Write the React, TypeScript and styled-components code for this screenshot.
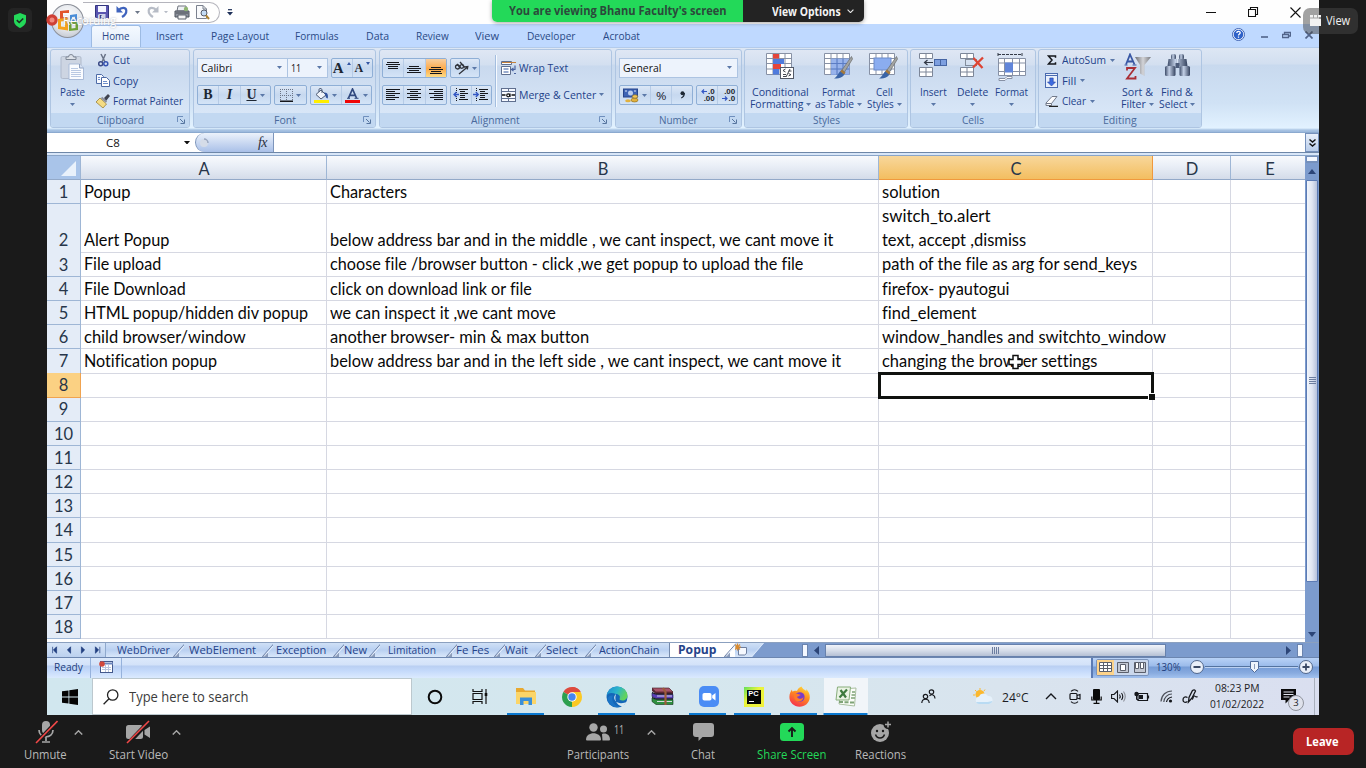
import React, { useLayoutEffect, useRef, useState } from 'react';
import styled, { createGlobalStyle, css } from 'styled-components';

const Global = createGlobalStyle`
  * { box-sizing: border-box; }
  body { margin: 0; background: #1a1a1a; overflow: hidden; font-variant-ligatures: none; }
  svg { display: block; flex: none; }
`;

const ui = `"Open Sans", "Noto Sans", sans-serif`;
const cellFont = `Lato, "Noto Sans", sans-serif`;

/* ---------- fitted text ---------- */
const FitBox = styled.span<{ $w: number }>`
  display: inline-block;
  width: ${p => p.$w}px;
  flex: none;
  text-align: left;
`;
const FitSpan = styled.span`
  display: inline-block;
  white-space: pre;
  transform-origin: 0 50%;
`;

/* Condenses or widens the text so that it takes exactly w pixels. */
function Fit({ w, children }: { w: number; children: string }) {
  const ref = useRef<HTMLSpanElement>(null);
  const [scale, setScale] = useState(1);
  useLayoutEffect(() => {
    setScale(w / ref.current!.offsetWidth);
  }, [w, children]);
  return <FitBox $w={w}><FitSpan ref={ref} style={{ transform: `scaleX(${scale})` }}>{children}</FitSpan></FitBox>;
}

/* ---------- page frame ---------- */
const Page = styled.div`
  position: relative;
  width: 1366px;
  height: 768px;
  display: flex;
  flex-direction: column;
  background: #1a1a1a;
  font-family: ${ui};
`;
const Screen = styled.div`
  width: 1272px;
  height: 715px;
  margin-left: 47px;
  display: flex;
  flex-direction: column;
  background: #fff;
  overflow: hidden;
`;

/* ---------- title bar ---------- */
const TitleBar = styled.div`
  height: 24px;
  flex: none;
  display: flex;
  align-items: center;
  justify-content: space-between;
  background: #fefefe;
`;
const QuickAccess = styled.div`
  display: flex;
  align-items: center;
  width: 137px;
  height: 21px;
  margin-left: 36px;
  padding-left: 12px;
  border: 1px solid #b4b4bc;
  border-left: none;
  border-radius: 0 11px 11px 0;
`;
const QuickSlot = styled.div<{ $w: number }>`
  width: ${p => p.$w}px;
  display: flex;
  justify-content: center;
`;
const TitleLeft = styled.div`
  display: flex;
  align-items: center;
  gap: 7px;
`;
const WindowButtons = styled.div`
  display: flex;
  align-items: center;
  padding-right: 18px;
  gap: 31px;
`;

/* ---------- ribbon ---------- */
const TabRow = styled.div`
  height: 23px;
  flex: none;
  display: flex;
  align-items: stretch;
  padding-left: 44px;
  background: #bfd9ff;
`;
const RibbonTab = styled.div<{ $w: number; $active?: boolean }>`
  width: ${p => p.$w}px;
  display: flex;
  align-items: center;
  justify-content: center;
  padding-top: 1px;
  font-size: 11.5px;
  line-height: 16px;
  color: #2a4a86;
  ${p => p.$active && css`
    margin-top: 1px;
    padding: 0 0 1px;
    background: linear-gradient(#f4f9ff, #e3edf9);
    border: 1px solid #9dbbe3;
    border-bottom: none;
    border-radius: 3px 3px 0 0;
  `}
`;
const DocButtons = styled.div`
  margin-left: auto;
  display: flex;
  align-items: center;
  padding: 0 6px 2px 0;
  gap: 14px;
`;
const HelpSlot = styled.div`
  margin-right: -6px;
  padding-right: 8px;
`;
const Ribbon = styled.div`
  height: 86px;
  flex: none;
  display: flex;
  padding: 1px 0 5px 3px;
  background: linear-gradient(#dde7f4 0, #d2dff0 16px, #c8d9ee 17px, #d0e2f5 55px, #e2f2ff 80px, #a9c4e3 82px, #9ab8dc 84px, #5f7fa8 86px);
  border-top: 1px solid #b3cbeb;
`;
const Group = styled.div<{ $w: number; $gap: number }>`
  width: ${p => p.$w}px;
  height: 79px;
  margin-right: ${p => p.$gap}px;
  flex: none;
  display: flex;
  flex-direction: column;
  border: 1px solid #aec5e2;
  border-radius: 3px;
  background: linear-gradient(#dfe7f4 0, #d3dff0 15px, #c9d9ee 16px, #d8e6f7 63px);
  overflow: hidden;
`;
const GroupBody = styled.div`
  height: 63px;
  display: flex;
  flex: none;
`;
const GroupLabel = styled.div`
  flex: 1;
  position: relative;
  display: flex;
  align-items: center;
  justify-content: center;
  background: #c2d8f1;
  color: #4a6a9c;
  font-size: 11.5px;
  line-height: 14px;
`;
const Launcher = styled.svg`
  position: absolute;
  right: 3px;
  top: 2px;
`;
const BigButton = styled.div<{ $w: number }>`
  width: ${p => p.$w}px;
  flex: none;
  display: flex;
  flex-direction: column;
  align-items: center;
  padding-top: 3px;
  color: #23428a;
  font-size: 11px;
  line-height: 12px;
  white-space: nowrap;
`;
const IconSlot = styled.div`
  height: 33px;
`;
const BigLine = styled.div`
  height: 12px;
  display: flex;
  align-items: center;
  gap: 3px;
`;
const SmallColumn = styled.div<{ $pl: number; $w: number }>`
  width: ${p => p.$w}px;
  flex: none;
  padding: 0 0 0 ${p => p.$pl}px;
`;
const SmallButton = styled.div<{ $icon?: number }>`
  height: 20.5px;
  display: grid;
  grid-template-columns: ${p => p.$icon ?? 17}px auto auto;
  justify-content: start;
  align-items: center;
  column-gap: 1px;
  color: #23428a;
  font-size: 11.2px;
  line-height: 14px;
`;
const ControlRows = styled.div<{ $pl?: number }>`
  padding: 8px 0 0 ${p => p.$pl ?? 3}px;
  display: flex;
  flex-direction: column;
  gap: 7px;
`;
const ControlRow = styled.div`
  height: 20px;
  display: flex;
  gap: 3px;
`;
const Combo = styled.div<{ $w: number }>`
  width: ${p => p.$w}px;
  height: 20px;
  padding: 0 5px 1px 3px;
  display: flex;
  align-items: center;
  justify-content: space-between;
  background: #edf3fc;
  border: 1px solid #adc4e2;
  color: #111;
  font-size: 11.5px;
  & + & { margin-left: -4px; }
`;
const Cluster = styled.div<{ $w: number }>`
  width: ${p => p.$w}px;
  height: 20px;
  display: flex;
  border: 1px solid #8fafd6;
  border-radius: 2px;
  background: linear-gradient(#dce7f6, #c6d8ef 50%, #d4e4f7);
  font-size: 11.5px;
  color: #1d2733;
`;
const ToolButton = styled.div<{ $on?: boolean; $w?: number }>`
  flex: ${p => (p.$w ? `0 0 ${p.$w}px` : '1')};
  display: flex;
  align-items: center;
  justify-content: center;
  gap: 3px;
  & + & { border-left: 1px solid #b6cbe6; }
  ${p => p.$on && css`background: linear-gradient(#f8cfa0, #fca949 55%, #fedc85);`}
`;
const Glyph = styled.span<{ $size?: number; $italic?: boolean; $under?: boolean }>`
  font-family: "Liberation Serif", serif;
  font-weight: 700;
  font-size: ${p => p.$size ?? 14}px;
  line-height: 16px;
  color: #1d2733;
  font-style: ${p => (p.$italic ? 'italic' : 'normal')};
  text-decoration: ${p => (p.$under ? 'underline' : 'none')};
`;
const VRule = styled.div`
  width: 1px;
  height: 52px;
  margin: 5px 4px 0 3px;
  background: #f6faff;
  border-left: 1px solid #a4bedf;
  box-sizing: content-box;
`;
const WideButton = styled.div`
  height: 20px;
  display: flex;
  align-items: center;
  gap: 3px;
  padding-bottom: 1px;
  color: #23428a;
  font-size: 11.2px;
`;
const DownPad = styled.div`
  padding-left: 3px;
`;

/* ---------- formula bar ---------- */
const FormulaBar = styled.div`
  height: 20px;
  flex: none;
  display: flex;
  background: #fff;
  border-bottom: 1px solid #6e87a8;
`;
const NameBox = styled.div`
  width: 148px;
  display: flex;
  align-items: center;
  padding: 0 5px 0 59px;
  justify-content: space-between;
  font-size: 11.5px;
  line-height: 18px;
  color: #111;
`;
const FxArea = styled.div`
  width: 79px;
  display: flex;
  align-items: center;
  justify-content: space-between;
  padding: 0 6px 0 3px;
  background: linear-gradient(#ecf2fb, #a9c0e8);
  border: 1px solid #7d95bb;
  border-width: 0 1px 0 1px;
  border-radius: 10px 0 0 10px;
`;
const FxGlyph = styled.span`
  font: italic 400 14px/16px "Liberation Serif", serif;
  color: #2a3040;
  letter-spacing: -0.5px;
`;
const ExpandButton = styled.div`
  width: 14px;
  margin-left: auto;
  display: flex;
  align-items: center;
  justify-content: center;
  border: 1px solid #7590bb;
  background: linear-gradient(#e9f0fb, #b9cdea);
`;
const FormulaGap = styled.div`
  height: 3px;
  flex: none;
  background: #d8e6f8;
  border-bottom: 1px solid #8aa5c8;
`;

/* ---------- sheet ---------- */
const SheetArea = styled.div`
  height: 486px;
  flex: none;
  display: flex;
`;
const Grid = styled.div`
  position: relative;
  width: 1258px;
  overflow: hidden;
  font-family: ${cellFont};
  font-size: 16.5px;
  color: #080808;
`;
const columns = '34px 246px 552px 274px 78px 78px';
const HeaderRow = styled.div`
  height: 23.8px;
  display: grid;
  grid-template-columns: ${columns};
`;
const ColHead = styled.div<{ $active?: boolean }>`
  display: flex;
  align-items: center;
  justify-content: center;
  padding: 3px 0 0 1px;
  font-size: 16.5px;
  color: #27364a;
  background: linear-gradient(#f8fafd, #e9eef6 45%, #d4dce9);
  border-right: 1px solid #9eb6d5;
  border-bottom: 1px solid #93a9c8;
  ${p => p.$active && css`
    background: linear-gradient(#f8d79b, #f3be60);
    border-color: #f0993d;
  `}
`;
const Corner = styled.div`
  display: flex;
  align-items: flex-end;
  justify-content: flex-end;
  padding: 0 4px 3px 0;
  background: #a9c4e9;
  border-right: 1px solid #9eb6d5;
  border-bottom: 1px solid #93a9c8;
`;
const Row = styled.div<{ $tall?: boolean }>`
  height: ${p => (p.$tall ? 48.4 : 24.2)}px;
  display: grid;
  grid-template-columns: ${columns};
`;
const RowHead = styled.div<{ $active?: boolean }>`
  display: flex;
  align-items: flex-end;
  justify-content: center;
  line-height: 21.2px;
  font-size: 16.5px;
  color: #27364a;
  background: #e4ecf7;
  border-right: 1px solid #9eb6d5;
  border-bottom: 1px solid #9eb6d5;
  ${p => p.$active && css`
    background: #fbd183;
    border-color: #f0a350;
  `}
`;
const Cell = styled.div<{ $spill?: boolean }>`
  display: flex;
  flex-direction: column;
  justify-content: flex-end;
  align-items: flex-start;
  padding-left: 3px;
  line-height: 24px;
  min-width: 0;
  border-right: 1px solid ${p => (p.$spill ? 'transparent' : '#d6d8e2')};
  border-bottom: 1px solid #d6d8e2;
`;
const CellLine = styled.div`
  height: 24.2px;
  white-space: nowrap;
  &:last-child { height: 23.4px; }
`;
const Selection = styled.div`
  position: absolute;
  left: 831px;
  top: 216px;
  width: 276px;
  height: 27px;
  border: 3px solid #10120f;
  &::after {
    content: '';
    position: absolute;
    right: -4px;
    bottom: -4px;
    width: 6px;
    height: 6px;
    background: #10120f;
    border: 1px solid #fff;
    border-width: 1px 0 0 1px;
  }
`;
const Pointer = styled.svg`
  position: absolute;
  left: 961px;
  top: 198px;
`;
const VScroll = styled.div`
  width: 14px;
  display: flex;
  flex-direction: column;
  align-items: center;
  background: #7c9bcd;
`;
const SplitBox = styled.div`
  width: 12px;
  height: 7px;
  background: #f4f8ff;
  border: 1px solid #7590bb;
  border-bottom-width: 2px;
`;
const VArrow = styled.div`
  height: 17px;
  display: flex;
  align-items: center;
`;
const VThumb = styled.div`
  width: 12px;
  height: 402px;
  display: flex;
  align-items: center;
  justify-content: center;
  border: 1px solid #5c7bb4;
  border-radius: 1px;
  background: linear-gradient(90deg, #f2f6fc, #dfe5f2 50%, #b6c2dc);
`;
const VRest = styled.div`
  flex: 1;
  display: flex;
  align-items: flex-end;
  padding-bottom: 5px;
`;

/* ---------- sheet tabs ---------- */
const TabStrip = styled.div`
  height: 16px;
  flex: none;
  display: flex;
  background: #7c9bcd;
  border-top: 1px solid #8ba0bf;
  border-bottom: 1px solid #6c86b0;
`;
const TabNav = styled.div`
  width: 59px;
  display: flex;
  align-items: center;
  gap: 4px;
  padding-left: 3px;
  background: linear-gradient(#d5e4f7, #bcd1ef);
  border-right: 1px solid #8fa9cd;
`;
const SheetTab = styled.div<{ $w: number; $active?: boolean }>`
  width: ${p => p.$w}px;
  display: flex;
  background: linear-gradient(#cfe0f6, #b9d0f1 50%, #d9e7fa);
  font-size: 11.5px;
  line-height: 14px;
  color: #25438a;
  ${p => p.$active && css`
    background: #fff;
    font-weight: 700;
    border-left: 1px solid #7489ab;
  `}
`;
const SheetName = styled.div<{ $w: number }>`
  width: ${p => p.$w}px;
  flex: none;
  display: flex;
  justify-content: center;
`;
const SlashHolder = styled.div`
  flex: 1;
  min-width: 0;
  display: flex;
  justify-content: flex-end;
  margin-right: -3px;
`;
const NewSheet = styled.div`
  width: 33px;
  display: flex;
  background: linear-gradient(#cfe0f6, #b9d0f1 50%, #d9e7fa);
`;
const HScroll = styled.div`
  flex: 1;
  display: flex;
  align-items: center;
  padding-left: 34px;
`;
const HSplit = styled.div`
  width: 6px;
  height: 13px;
  flex: none;
  background: #f4f8ff;
  border: 1px solid #6b84ae;
`;
const HThumb = styled.div`
  width: 341px;
  height: 13px;
  margin-left: 3px;
  display: flex;
  align-items: center;
  justify-content: center;
  border: 1px solid #6781ac;
  background: linear-gradient(#f1f4fa, #d6dde9 50%, #b5c0d4);
`;
const Spring = styled.div`
  flex: 1;
`;
const EndPad = styled.div`
  width: 16px;
`;

/* ---------- status bar ---------- */
const StatusBar = styled.div`
  height: 20px;
  flex: none;
  display: flex;
  align-items: stretch;
  background: linear-gradient(#dce9fb 0, #d3e2f9 7px, #b9cff2 8px, #c5dafb 13px, #dbeafe);
  color: #23407c;
  font-size: 10.5px;
`;
const StatusCell = styled.div<{ $w: number }>`
  width: ${p => p.$w}px;
  display: flex;
  align-items: center;
  justify-content: center;
  padding-bottom: 2px;
  border-right: 1px solid #96b2dc;
`;
const ZoomArea = styled.div`
  margin-left: auto;
  width: 228px;
  display: flex;
  align-items: center;
  padding: 0 0 2px 3px;
  border-left: 2px solid #5b7bb4;
  background: linear-gradient(#b9d2f6 0, #9bbbea 8px, #769cd6 9px, #88abdf 15px, #a3c2ef);
`;
const ViewModes = styled.div`
  width: 53px;
  height: 17px;
  display: flex;
  border: 1px solid #7a93bb;
  border-radius: 2px;
  background: #cbd8ec;
`;
const ViewMode = styled.div<{ $on?: boolean }>`
  flex: 1;
  display: flex;
  align-items: center;
  justify-content: center;
  background: ${p => (p.$on ? '#fdd38a' : 'transparent')};
`;
const Percent = styled.div`
  width: 41px;
  padding-left: 7px;
`;

/* ---------- taskbar ---------- */
const TaskBar = styled.div`
  height: 37px;
  flex: none;
  display: flex;
  align-items: stretch;
  background: linear-gradient(90deg, #d1e7ef, #d5e7ee 50%, #d9e4ee 75%, #dadff0);
`;
const StartButton = styled.div`
  width: 45px;
  display: flex;
  align-items: center;
  justify-content: center;
`;
const SearchBox = styled.div`
  width: 320px;
  display: flex;
  align-items: center;
  padding-left: 10px;
  gap: 10px;
  background: #fff;
  border: 1px solid #bcc8ce;
  color: #3c3c3c;
  font-size: 14.5px;
`;
const AppButton = styled.div<{ $w?: number; $open?: boolean; $active?: boolean }>`
  width: ${p => p.$w ?? 45.7}px;
  flex: none;
  display: flex;
  align-items: center;
  justify-content: center;
  background: ${p => (p.$active ? 'linear-gradient(#f1f5f9, #f1f5f9) center / 44px 37px no-repeat' : 'none')};
  ${p => p.$open && css`
    &::after {
      content: '';
      width: ${p.$active ? 44 : 37}px;
      height: 2px;
      margin-left: -${p.$active ? 44 : 37}px;
      align-self: flex-end;
      background: #0a78d0;
      transform: translateX(${p.$active ? 10.5 : 7}px);
    }
  `}
`;
const Tray = styled.div`
  margin-left: auto;
  display: flex;
  align-items: center;
`;
const TraySlot = styled.div<{ $w: number }>`
  width: ${p => p.$w}px;
  display: flex;
  align-items: center;
  justify-content: center;
`;
const Temp = styled.div`
  width: 36px;
  margin-left: -22px;
  font-size: 13px;
  color: #1c1c24;
`;
const Clock = styled.div`
  width: 68px;
  display: flex;
  flex-direction: column;
  align-items: center;
  padding-bottom: 2px;
  gap: 1px;
  font-size: 11.5px;
  line-height: 15.5px;
  color: #1c1c24;
`;
const Notif = styled.div`
  position: relative;
`;
const NotifCount = styled.div`
  position: absolute;
  left: 7px;
  top: 6px;
  width: 16px;
  height: 16px;
  text-align: center;
  border: 1px solid #8f939d;
  border-radius: 50%;
  background: #dfe2ec;
  color: #1c1c24;
  font-size: 9.5px;
  line-height: 14px;
`;
const NotifGap = styled.div`
  width: 7px;
`;
const ShowDesktop = styled.div`
  width: 5px;
  height: 37px;
  border-left: 1px solid #a9b0bd;
`;

/* ---------- meeting bar ---------- */
const MeetingBar = styled.div`
  height: 53px;
  display: grid;
  grid-template-columns: 185px 359px 1fr 73px;
  color: #b9b9b9;
  font-size: 12px;
`;
const MeetingGroup = styled.div<{ $pl: number }>`
  display: flex;
  padding-left: ${p => p.$pl}px;
`;
const MeetingButton = styled.div<{ $w: number; $green?: boolean }>`
  width: ${p => p.$w}px;
  flex: none;
  display: flex;
  flex-direction: column;
  align-items: center;
  padding-top: 4px;
  gap: 3px;
  line-height: 16px;
  color: ${p => (p.$green ? '#23d959' : '#b9b9b9')};
`;
const MeetingIcon = styled.div`
  height: 25px;
  display: flex;
  align-items: center;
`;
const Caret = styled.div<{ $w: number; $back?: boolean }>`
  width: ${p => p.$w}px;
  flex: none;
  margin-left: ${p => (p.$back ? -24 : 0)}px;
  padding-top: 15px;
  display: flex;
  justify-content: center;
`;
const Count = styled.span`
  position: absolute;
  left: 614px;
  top: 722px;
  color: #b9b9b9;
  font-size: 12.5px;
  line-height: 16px;
`;
const LeaveButton = styled.div`
  width: 61px;
  height: 27px;
  margin-top: 13px;
  display: flex;
  align-items: center;
  justify-content: center;
  padding: 0 2px 1px 0;
  border-radius: 7px;
  background: #b82525;
  color: #fff;
  font-size: 12.5px;
  font-weight: 700;
`;

/* ---------- overlays ---------- */
const Banner = styled.div`
  position: absolute;
  left: 492px;
  top: 0;
  height: 22px;
  display: flex;
  border-radius: 0 0 5px 5px;
  overflow: hidden;
  font-size: 12.5px;
  line-height: 21px;
  font-weight: 700;
  box-shadow: 0 1px 4px rgba(0, 0, 0, 0.35);
`;
const BannerText = styled.div`
  width: 251px;
  display: flex;
  justify-content: center;
  padding-left: 1px;
  background: #23d959;
  color: #2b4a3b;
`;
const BannerOptions = styled.div`
  width: 121px;
  display: flex;
  align-items: center;
  padding-left: 29px;
  gap: 6px;
  background: #232323;
  color: #f4f4f4;
`;
const Shield = styled.div`
  position: absolute;
  left: 8px;
  top: 8px;
  width: 24px;
  height: 24px;
  display: flex;
  align-items: center;
  justify-content: center;
  border-radius: 5px;
  background: #242424;
`;
const ViewBadge = styled.div`
  position: absolute;
  left: 1303px;
  top: 8px;
  width: 55px;
  height: 26px;
  display: flex;
  align-items: center;
  padding: 0 0 2px 7px;
  gap: 5px;
  border-radius: 7px;
  background: rgba(70, 70, 70, 0.5);
  color: #f2f2f2;
  font-size: 12px;
`;
const OfficeButton = styled.div`
  position: absolute;
  left: 51px;
  top: 4px;
  width: 33px;
  height: 34px;
  display: flex;
  align-items: center;
  justify-content: center;
  padding-left: 2px;
  border-radius: 50%;
  border: 1px solid #8b8f98;
  background: radial-gradient(circle at 50% 35%, #fff, #e2e5ea 55%, #b4b9c4);
`;
const Recording = styled.div`
  position: absolute;
  left: 46px;
  top: 12px;
  height: 16px;
  display: flex;
  align-items: center;
  gap: 5px;
  color: #fff;
  font-size: 12px;
  text-shadow: 0 0 2px rgba(120, 130, 145, 0.65);
`;

/* ---------- drawings ---------- */
const Down = ({ s = 5, c = '#5b78a8' }: { s?: number; c?: string }) => (
  <svg width={s} height={s * 0.6} viewBox="0 0 10 6"><path d="M0 0h10L5 6z" fill={c} /></svg>
);
const FarDown = () => <DownPad><Down s={5} /></DownPad>;

type Lines = number[][];
const LineIcon = ({ lines }: { lines: Lines }) => (
  <svg width="14" height="14" viewBox="0 0 14 14">
    {lines.map(([x, y, w], i) => <rect key={i} x={x} y={y} width={w} height="1" fill="#15171c" />)}
  </svg>
);
const topAlign: Lines = [[1, 1, 12], [0, 3, 14], [2, 5, 10], [2, 7, 10]];
const midAlign: Lines = [[2, 5, 10], [0, 7, 14], [2, 9, 10], [0, 11, 14]];
const bottomAlign: Lines = [[2, 6, 10], [0, 8, 14], [2, 10, 10], [1, 12, 12]];
const leftAlign: Lines = [[0, 1, 14], [0, 3, 9], [0, 5, 14], [0, 7, 9], [0, 9, 13], [0, 11, 9]];
const centerAlign: Lines = [[0, 1, 14], [3, 3, 8], [0, 5, 14], [3, 7, 8], [0, 9, 14], [3, 11, 8]];
const rightAlign: Lines = [[0, 1, 14], [5, 3, 9], [0, 5, 14], [5, 7, 9], [1, 9, 13], [5, 11, 9]];

const Indent = ({ out }: { out?: boolean }) => (
  <svg width="16" height="14" viewBox="0 0 16 14">
    <path d="M6 1.500h9M7 3.500h5M7 5.500h8M7 7.500h5M7 9.500h5M6 11.500h9" stroke="#15171c" strokeWidth="1.200" />
    <path d="M3.500 0v13" stroke="#15171c" strokeDasharray="1 1" />
    <path d={out ? 'M6 6.500H1M3.500 4 1 6.500 3.500 9' : 'M0 6.500h5M2.800 4 5.300 6.500 2.800 9'} stroke="#3457c4" strokeWidth="1.300" fill="none" />
  </svg>
);

const LauncherMark = () => (
  <Launcher width="10" height="10" viewBox="0 0 10 10">
    <path d="M1.500 7V1.500H7" fill="none" stroke="#6f8fbd" />
    <path d="M4 4l3.500 3.500M8.500 4.500v4h-4" fill="none" stroke="#56759f" />
  </Launcher>
);

const SaveIcon = () => (
  <svg width="14" height="14" viewBox="0 0 14 14">
    <path d="M.5.5h13v13H2L.5 12z" fill="#5a55b0" stroke="#32357f" />
    <rect x="3" y="1" width="8" height="6" fill="#f4f6ff" /><rect x="3.500" y="9" width="7" height="4.500" fill="#cdd3ea" /><rect x="4.500" y="10" width="2" height="3" fill="#33377f" />
  </svg>
);
const UndoIcon = ({ c, flip }: { c: string; flip?: boolean }) => (
  <svg width="13" height="14" viewBox="0 0 13 14">
    <g transform={flip ? 'translate(13 0) scale(-1 1)' : undefined}>
      <path d="M2.500 5.500C5 2 10 1.800 10.300 5.500c.2 2.800-1.500 4.800-4.300 6.500" fill="none" stroke={c} strokeWidth="2.200" />
      <path d="M.5 1v6.500H7z" fill={c} />
    </g>
  </svg>
);
const PrinterIcon = () => (
  <svg width="16" height="15" viewBox="0 0 16 15">
    <path d="M4 1h8l1 5H3z" fill="#eef0f4" stroke="#70757f" />
    <path d="M1 6h14v6H1z" fill="#8e939e" stroke="#4d525c" />
    <path d="M4 10h8v4H4z" fill="#f6f6f6" stroke="#5d626c" /><circle cx="12" cy="4" r="2.200" fill="#8fb572" /><path d="M2 8h12" stroke="#4a4e57" />
  </svg>
);
const PreviewIcon = () => (
  <svg width="15" height="15" viewBox="0 0 15 15">
    <path d="M1.500.5H8L11.500 4v9.500h-10z" fill="#f9fafc" stroke="#7b818e" /><path d="M8 .5V4h3.500" fill="none" stroke="#7b818e" />
    <circle cx="9" cy="8" r="3" fill="#c4dcf5" stroke="#555b68" /><path d="M11 10.300l3 3.700" stroke="#b08430" strokeWidth="2" />
  </svg>
);
const OfficeLogo = () => (
  <svg width="23" height="24" viewBox="0 0 23 24">
    <path d="M3 2l9-1v3H6v4h6v3H3z" fill="#e2552b" /><path d="M13 6l7-1v7h-7zM15 8v2.500h3V7.700z" fill="#4b8ed8" fillRule="evenodd" />
    <path d="M1 10l10-1.500v13L1 20zM4 12.500v5l4 .5v-6z" fill="#f5a21c" fillRule="evenodd" /><path d="M12 13h9v8l-9 1zM14.500 15.500v4l4-.5v-3.500z" fill="#6ea236" fillRule="evenodd" />
  </svg>
);
const PasteIcon = () => (
  <svg width="26" height="29" viewBox="0 0 26 29">
    <rect x="1" y="3.500" width="20" height="22" rx="1.500" fill="#cdd5e2" stroke="#b0bacb" />
    <path d="M6 6.500h10V4h-2.500a2.500 2.500 0 0 0-5 0H6z" fill="#dde2ea" stroke="#7e8796" />
    <path d="M9 11h10.500l4 4v11.500H9z" fill="#fafcff" stroke="#a9bbd8" />
    <path d="M19.500 11v4h4" fill="#d5e0f1" stroke="#8da0c0" /><path d="M11 15.500h7M11 17.500h10M11 19.500h10M11 21.500h10M11 23.500h10" stroke="#b9c9e3" />
  </svg>
);
const CutIcon = () => (
  <svg width="14" height="14" viewBox="0 0 14 14">
    <path d="M5 1l4 8M9.500 1 6 9" stroke="#6a7488" strokeWidth="1.500" /><circle cx="4.700" cy="10.800" r="2" fill="none" stroke="#3b4a86" strokeWidth="1.500" /><circle cx="9.800" cy="10.800" r="2" fill="none" stroke="#3552b0" strokeWidth="1.500" />
  </svg>
);
const CopyIcon = () => (
  <svg width="14" height="13" viewBox="0 0 14 13">
    <path d="M.5.5h5l2 2v7h-7z" fill="#f7faff" stroke="#4e6ba6" /><path d="M5.500 3.500h5l3 3v6h-8z" fill="#fff" stroke="#4e6ba6" /><path d="M2 3.500h2M2 5.500h2M7 7.500h4M7 9.500h5" stroke="#6d8dcb" />
  </svg>
);
const PainterIcon = () => (
  <svg width="14" height="14" viewBox="0 0 14 14">
    <path d="M8 4l4-4 2 2-4 5z" fill="#3f4350" /><path d="M4 4l6.500 6-3.500 4-7-6z" fill="#f5dc84" stroke="#8f7426" strokeWidth=".7" /><path d="M5.500 3.500 10.500 8" stroke="#8d8f9c" strokeWidth="2" />
  </svg>
);
const BordersIcon = () => (
  <svg width="13" height="13" viewBox="0 0 13 13"><path d="M.5 0v12M6.500 0v12M12.500 0v12M0 .5h13M0 6.500h13" stroke="#6a7385" strokeDasharray="1 1" /><path d="M0 12.300h13" stroke="#15171c" strokeWidth="1.400" /></svg>
);
const BucketIcon = () => (
  <svg width="15" height="15" viewBox="0 0 15 15"><path d="M2 6.500 7 2l5 5-5 4z" fill="#f0f4fa" stroke="#4d5b74" /><path d="M5 4V1.500C5 0 8 0 8 2v3" fill="none" stroke="#4d5b74" /><path d="M10 4.500c3.500-.5 4.500 2.500 3.800 6-2-.5-2.300-2-2.300-3z" fill="#31549f" /><rect y="12" width="15" height="3" fill="#ffee00" /></svg>
);
const FontColorIcon = () => (
  <svg width="15" height="15" viewBox="0 0 15 15"><path d="M3.500 10 7.500 1l4 9M5 7.300h5" fill="none" stroke="#31497f" strokeWidth="1.700" /><path d="M2 10.300h3M9.500 10.300h4" stroke="#31497f" /><rect y="12" width="15" height="3" fill="#f00606" /></svg>
);
const OrientIcon = () => (
  <svg width="15" height="14" viewBox="0 0 15 14"><g fill="none" stroke="#30343c" strokeWidth="1.300"><circle cx="3.500" cy="6" r="2" /><path d="M3 3l3.500 4M6 1l5 5.500" /><circle cx="7.800" cy="5.500" r="1.800" /><path d="M5 13l8.500-7M10.800 5.800l3-.3-.5 3" /></g></svg>
);
const WrapIcon = () => (
  <svg width="15" height="15" viewBox="0 0 15 15"><path d="M.5 1.500h10v3H.5zM.5 6.500h9v8h-9z" fill="#fff" stroke="#5f6f8f" /><path d="M1 2.500h14" stroke="#c4803c" /><path d="M2.500 9h5M2.500 12h5" stroke="#35589e" /><path d="M14 5.500v4h-3M13 13.500h2M12.500 8l-2 1.500 2 1.500" fill="none" stroke="#4a63a0" strokeWidth="1.200" /></svg>
);
const MergeIcon = () => (
  <svg width="15" height="14" viewBox="0 0 15 14"><rect x=".5" y=".5" width="14" height="13" fill="#f6f9ff" stroke="#5f6f8f" /><path d="M0 3.500h15M0 10.500h15M7.500 0v3.500M7.500 10.500V14" stroke="#5f6f8f" /><path d="M1 7h3.500M14 7h-3.500" stroke="#111" strokeWidth="1.500" /><circle cx="7.200" cy="7.300" r="1.500" fill="none" stroke="#111" strokeWidth="1.200" /><path d="M9 5.500V9" stroke="#111" strokeWidth="1.200" /></svg>
);
const CurrencyIcon = () => (
  <svg width="16" height="15" viewBox="0 0 16 15"><rect x=".5" y="1" width="14" height="8" fill="#3d63b4" stroke="#27458c" /><circle cx="7.500" cy="5" r="2.500" fill="#b8ccef" /><path d="M2 3h2M11 3h2" stroke="#dbe6fa" /><ellipse cx="11.500" cy="12" rx="3.500" ry="2" fill="#e1b13e" stroke="#8c681a" strokeWidth=".6" /><ellipse cx="12" cy="8.500" rx="2.800" ry="1.700" fill="#f0c75b" stroke="#8c681a" strokeWidth=".6" /><ellipse cx="5" cy="12.700" rx="2.800" ry="1.500" fill="#e1b13e" /></svg>
);
const DecimalBox = styled.div`
  display: flex;
  flex-direction: column;
  align-items: flex-end;
  width: 16px;
  font: 700 8px/7px "Liberation Sans", sans-serif;
  color: #22262e;
`;
const DecimalLine = styled.div`
  display: flex;
  align-items: center;
  gap: 1px;
`;
const TinyArrow = ({ left }: { left?: boolean }) => (
  <svg width="6" height="5" viewBox="0 0 6 5"><path d={left ? 'M6 2.500H1M3 .5 1 2.500l2 2' : 'M0 2.500h5M3 .5l2 2-2 2'} stroke="#3457c4" strokeWidth="1.200" fill="none" /></svg>
);

const gridLines = 'M.5.5h25v21H.5zM.5 5.500h25M.5 10.500h25M.5 16h25M7 .5v21M13 .5v21M19 .5v21';
const Brush = () => (
  <>
    <path d="M27.500 3.500 18 17l2.500 2L28.500 6z" fill="#a2a4a3" stroke="#6b6d6c" strokeWidth=".7" />
    <path d="M18 17l3 2.500c-1 4-4 6-11 6 3.500-1.500 4-6.500 8-8.500z" fill="#3a64a6" />
    <path d="M17 17.500l3.800 3" stroke="#a6793a" strokeWidth="2.500" />
  </>
);
const CondIcon = () => (
  <svg width="28" height="28" viewBox="0 0 28 28">
    <path d={gridLines} fill="#fff" stroke="#8791a5" />
    <rect x="7" y="1" width="6" height="4.500" fill="#e4453b" /><rect x="7" y="6" width="11" height="5" fill="#4f7bdd" /><rect x="7" y="11" width="8" height="5" fill="#e4453b" /><rect x="7" y="16" width="6" height="5.500" fill="#4f7bdd" />
    <rect x="14.500" y="14.500" width="13" height="11" fill="#fff" stroke="#525967" /><path d="M19.500 16l-2.500 1.500 2.500 1.500M17 21.500h3M17 23.500h3M24 16l-4 8M22.500 18h3M22.500 20.500l2.500 1.200-2.500 1.300" fill="none" stroke="#2d323c" strokeWidth=".9" />
  </svg>
);
const FormatTableIcon = () => (
  <svg width="30" height="28" viewBox="0 0 30 28"><path d={gridLines} fill="#fff" stroke="#8791a5" /><path d="M7 5.500h18.500V22H7z" fill="#86a6e8" opacity=".85" /><path d="M7 10.500h18.500M7 16h18.500M13 5.500V22M19 5.500V22" stroke="#5b7cc4" /><Brush /></svg>
);
const CellStylesIcon = () => (
  <svg width="30" height="28" viewBox="0 0 30 28"><path d={gridLines} fill="#fff" stroke="#8791a5" /><rect x="5" y="5" width="17" height="12" fill="#8badf0" stroke="#6d8bc9" /><Brush /></svg>
);
const InsertIcon = () => (
  <svg width="28" height="26" viewBox="0 0 28 26"><path d="M.5.5h13v5H.5zM7 .5v5M.5 14.500h13v9H.5zM7 14.500v9M.5 19h13" fill="#fff" stroke="#7c8698" /><rect x="15.500" y="6.500" width="12" height="6" fill="#7d9fe0" stroke="#4565a4" /><path d="M21.500 7v5.500" stroke="#4565a4" /><path d="M14 9.500H5.500M8.500 7 5.500 9.500l3 2.500" fill="none" stroke="#333a47" strokeWidth="1.200" /></svg>
);
const DeleteIcon = () => (
  <svg width="25" height="26" viewBox="0 0 25 26"><path d="M.5.5h13v5H.5zM7 .5v5M.5 14.500h13v9H.5zM7 14.500v9M.5 19h13" fill="#fff" stroke="#7c8698" /><path d="M5.500 6.500h11v6h-11z" fill="none" stroke="#333a47" strokeDasharray="1 1" /><path d="M13.500 5l9 10M23 4.500l-10 10" stroke="#dd4433" strokeWidth="2.300" /></svg>
);
const FormatIcon = () => (
  <svg width="29" height="28" viewBox="0 0 29 28"><path d="M1 1.500h24M1 0v4M25 0v4" stroke="#333a47" strokeDasharray="3 1" /><path d="M1.500 5.500h27v17h-27zM1.500 10h27M1.500 18.500h27M7.500 5.500v17M15.500 5.500v17M22.500 5.500v17" fill="#fff" stroke="#8791a5" /><rect x="8" y="9.500" width="8" height="10" fill="#6186da" /><path d="M2 25.500h6l2-2h5v2h-5l-2 2H2z" fill="#fff" stroke="#8791a5" /></svg>
);
const SigmaIcon = () => (
  <svg width="12" height="10" viewBox="0 0 12 10"><path d="M10.500 2.800V1h-7L7 5 3.500 9h7V7.200" fill="none" stroke="#15171c" strokeWidth="1.500" /></svg>
);
const FillIcon = () => (
  <svg width="13" height="15" viewBox="0 0 13 15"><rect x=".5" y=".5" width="12" height="14" fill="#e9f0fc" stroke="#4a6bb0" /><path d="M1 2.500h11" stroke="#4a6bb0" /><path d="M4.800 5h3.400v4h2.300L6.500 13 2.500 9h2.300z" fill="#3e6be0" stroke="#2443a0" strokeWidth=".6" /></svg>
);
const EraserIcon = () => (
  <svg width="13" height="12" viewBox="0 0 13 12"><path d="M1 8 7 1.500h5L6.500 8.500v2H1z" fill="#fdfdff" stroke="#737b8b" /><path d="M6.500 8.500H1" stroke="#737b8b" /><path d="M4 11.400h9" stroke="#222" strokeWidth="1.200" /></svg>
);
const SortIcon = () => (
  <svg width="28" height="28" viewBox="0 0 28 28"><defs><linearGradient id="fun"><stop offset="0" stopColor="#6d6f74" /><stop offset=".5" stopColor="#d3d4d8" /><stop offset="1" stopColor="#77797f" /></linearGradient></defs><path d="M11 4h16l-6.500 8v11l-4.500-2.500V12z" fill="url(#fun)" /><path d="M2 11.500 6 1.500l4.500 10M3.500 8.500h5" fill="none" stroke="#3857a4" strokeWidth="1.800" /><path d="M.5 12h3M8.500 12h4" stroke="#3857a4" /><path d="M3 17.500v-2.500h8L3 25.500h8.500v-2.500" fill="none" stroke="#a92f37" strokeWidth="1.800" /></svg>
);
const BinocIcon = () => (
  <svg width="27" height="25" viewBox="0 0 27 25"><defs><linearGradient id="bin"><stop offset="0" stopColor="#3d4c69" /><stop offset=".4" stopColor="#c3d0e6" /><stop offset="1" stopColor="#34425e" /></linearGradient></defs><rect x="7" y="1" width="5" height="6" rx="2" fill="url(#bin)" /><rect x="15" y="1" width="5" height="6" rx="2" fill="url(#bin)" /><path d="M4.500 6h8.500v7H3.500zM14 6h8.500l1 7H14z" fill="url(#bin)" /><rect x="1" y="13" width="10.500" height="10" rx="1.500" fill="url(#bin)" /><rect x="15.500" y="13" width="10.500" height="10" rx="1.500" fill="url(#bin)" /><rect x="11.500" y="10" width="4" height="5" fill="#4d5c7a" /></svg>
);
const HelpIcon = () => (
  <svg width="13" height="13" viewBox="0 0 13 13"><circle cx="6.500" cy="6.500" r="6" fill="#fff" stroke="#3e63b4" /><circle cx="6.500" cy="6.500" r="4.800" fill="#2f62c9" /><path d="M4.800 5c0-2.300 3.500-2.200 3.400-.2 0 1.300-1.700 1.200-1.700 2.700M6.500 8.500v1.300" stroke="#fff" strokeWidth="1.300" fill="none" /></svg>
);

const Slash = () => (
  <svg width="15" height="14" viewBox="0 0 15 14"><path d="M1 13.500 7 9.500v4.500H1z" fill="#8b9cba" /><path d="M1.500 13.500 13 .5" stroke="#6f83a8" fill="none" /><path d="M3 13.500 14 1" stroke="#eaf2fd" fill="none" /></svg>
);

/* ---------- taskbar drawings ---------- */
const WinLogo = () => (
  <svg width="16" height="16" viewBox="0 0 16 16"><path d="M0 2.300 6.500 1.400v6.200H0zM7.300 1.300 16 0v7.600H7.300zM0 8.400h6.500v6.200L0 13.700zM7.300 8.400H16V16l-8.700-1.300z" fill="#050505" /></svg>
);
const SearchGlyph = () => (
  <svg width="16" height="16" viewBox="0 0 16 16"><circle cx="9.700" cy="6" r="5.200" fill="none" stroke="#222" strokeWidth="1.300" /><path d="M6 9.800.6 15.300" stroke="#222" strokeWidth="1.300" /></svg>
);
const TaskView = () => (
  <svg width="17" height="15" viewBox="0 0 17 15"><path d="M1 0v2.500h9V0M1 15v-2.500h9V15M1 4.500h9v6H1z" fill="none" stroke="#111" strokeWidth="1.200" /><path d="M14 0v15" stroke="#111" strokeWidth="1.200" /><path d="M12.700 4h2.600v3h-2.600z" fill="#111" /></svg>
);
const FolderIcon = () => (
  <svg width="22" height="19" viewBox="0 0 22 19"><path d="M1 1h7l2 2.500h10V17H1z" fill="#e8a92f" /><path d="M1 5h20v12H1z" fill="#fbd568" /><path d="M5 18v-7.500h12V18h-3.500v-4h-5v4z" fill="#3a8fd8" /></svg>
);
const ChromeIcon = () => (
  <svg width="20" height="20" viewBox="0 0 20 20"><path d="M10 10 1.340 5A10 10 0 0 1 18.660 5z" fill="#dd4b3e" /><path d="M10 10 18.660 5A10 10 0 0 1 10 20z" fill="#fbc924" /><path d="M10 10v10A10 10 0 0 1 1.340 5z" fill="#2da04f" /><path d="M10 5h8.660L14 12.300z" fill="#fbc924" /><path d="M10 5h8.660A10 10 0 0 0 10 0z" fill="#dd4b3e" /><circle cx="10" cy="10" r="4.700" fill="#fff" /><circle cx="10" cy="10" r="3.700" fill="#4586f0" /></svg>
);
const EdgeIcon = () => (
  <svg width="22" height="22" viewBox="0 0 22 22"><defs><linearGradient id="ed" x1="0" y1="0" x2="1" y2=".4"><stop offset="0" stopColor="#1c87d6" /><stop offset=".55" stopColor="#2cb6c9" /><stop offset="1" stopColor="#62d35c" /></linearGradient></defs><circle cx="11" cy="11" r="10.500" fill="#1467b8" /><path d="M.5 10.500C1 4.500 5.500.5 11 .5c6 0 10.500 4.500 10.500 9 0 3.500-2.500 5-5 5-2 0-3.500-1-2.800-2.300.9-1.700-.7-4.200-3.700-4.200C5.500 6.200 1 7 .5 10.500z" fill="url(#ed)" /><path d="M10 8c-2 1.500-2.500 4.500-.5 7 1.800 2.200 5.500 2.800 9.700 1.500.6-.2 1 .3.600.8L17 20.500c-4.500-.5-9.500-4.500-7-12.500z" fill="#d6e8f1" /><path d="M7 9.500c-2 3-.5 9.500 6.500 11.500C7 22.500 2 18 1.500 13 2 10 5 9 7 9.500z" fill="#1b74c6" /></svg>
);
const RarIcon = () => (
  <svg width="23" height="19" viewBox="0 0 23 19"><path d="M1 1h17l4 4H5z" fill="#a8546a" stroke="#3a1218" strokeWidth=".6" /><path d="M1 1l4 4h17v2H5L1 4z" fill="#5a2633" /><path d="M1 6l4 1.500h17v4H5L1 9.500z" fill="#5a3fb8" stroke="#16173f" strokeWidth=".6" /><path d="M1 11l4 1.500h17v5H5L1 14.500z" fill="#2f9040" stroke="#10331a" strokeWidth=".6" /><path d="M1 5.500l4 1.500h17M1 10.500l4 1.500h17" stroke="#141420" fill="none" /><path d="M6 9h15M6 14.500h15" stroke="#e6e4ee" strokeWidth=".9" /><path d="M12 1l2.500 4v13" stroke="#9c5c3a" strokeWidth="2.200" fill="none" /></svg>
);
const ZoomIcon = () => (
  <svg width="20" height="21" viewBox="0 0 20 21"><rect width="20" height="21" rx="5" fill="#4a8cf5" /><rect x="3.500" y="7" width="9" height="7.500" rx="1.800" fill="#fff" /><path d="M13.200 9.500 16.500 7v7.500l-3.300-2.500z" fill="#fff" /></svg>
);
const PyBox = styled.div`
  width: 20px;
  height: 20px;
  padding: 3px;
  background: linear-gradient(135deg, #5fe05a, #e9f53c 40%, #f2f03a);
`;
const PyInner = styled.div`
  width: 14px;
  height: 14px;
  padding-left: 1px;
  background: #050505;
  color: #fff;
  font: 700 7.500px/8px "Liberation Sans", sans-serif;
  &::after { content: ''; display: block; width: 5px; height: 1px; margin: 3px 0 0 1px; background: #fff; }
`;
const FirefoxIcon = () => (
  <svg width="21" height="21" viewBox="0 0 21 21"><defs><linearGradient id="fx" x1=".8" y1="0" x2=".3" y2="1"><stop offset="0" stopColor="#ffe03c" /><stop offset=".45" stopColor="#ff8a1f" /><stop offset="1" stopColor="#f5304e" /></linearGradient></defs><path d="M12.500.5c1 2.500 3 3 4.800 4.500 0-.8 0-1.500-.3-2 2.500 2 4 5 3.800 8.500C20.400 17 16 20.700 10.500 20.700 5 20.700.4 16.600.4 11 .4 7.500 2 4.800 3 3.500c0 1 .2 1.700.6 2.300C5 4.500 7 4.500 8 5c1-2.500 2.500-3.800 4.500-4.500z" fill="url(#fx)" /><circle cx="10.800" cy="11" r="4.800" fill="#7a3bc8" /><path d="M5 8c2.500-.8 5 .2 6.800 1-1.700.4-2 1.500-3.800 1.700C9 13.500 13 13.500 14.500 11 14 16 8 17 6 13.500 5 11.500 4.500 9.800 5 8z" fill="#ff7a26" /></svg>
);
const ExcelIcon = () => (
  <svg width="22" height="21" viewBox="0 0 22 21"><path d="M6 3l15-1-1.500 18L4 18z" fill="#fbfdf9" stroke="#a9bfa0" /><path d="M17 6h3M16.500 9h3.500M16 12h4" stroke="#7fa377" strokeWidth="1.500" /><path d="M4 16h4M9.500 16.300h4M15 16.600h4" stroke="#7fa377" strokeWidth="2" /><path d="M2.500 1h13l-1.500 13H1z" fill="#eaf3e4" stroke="#87ad7a" /><path d="M5.500 4 11 11.500M12 3.500 4.500 11.500" stroke="#3d7a3d" strokeWidth="2.200" /></svg>
);
const PeopleIcon = () => (
  <svg width="15" height="15" viewBox="0 0 15 15"><g fill="none" stroke="#15171c" strokeWidth="1.200"><circle cx="4.500" cy="7.500" r="2.200" /><path d="M.8 14c.2-5 7.200-5 7.400 0" /><circle cx="10.500" cy="3" r="2.200" /><path d="M8.500 7c2-2.500 5.500-1 5.500 2.500" /></g></svg>
);
const WeatherIcon = () => (
  <svg width="20" height="17" viewBox="0 0 20 17"><circle cx="7" cy="6.500" r="4.500" fill="#fbb82e" /><path d="M7 0v2M0 7h2M2 2l1.500 1.500M12 1.500 11 3" stroke="#fbb82e" /><path d="M6 16a3.800 3.800 0 0 1 0-7.500 5 5 0 0 1 9-.5 4 4 0 0 1 1 8z" fill="#e6f1fb" /><path d="M6 16h10a4 4 0 0 0 3.500-3c-5 1.500-11 1-16.500 1A4 4 0 0 0 6 16z" fill="#b9dbf3" /></svg>
);
const Chev = ({ w = 12, c = '#15171c', sw = 1.4, down }: { w?: number; c?: string; sw?: number; down?: boolean }) => (
  <svg width={w} height={w * 0.6} viewBox="0 0 12 7"><path d={down ? 'M1 1l5 5 5-5' : 'M1 6l5-5 5 5'} fill="none" stroke={c} strokeWidth={sw} /></svg>
);
const MeetNow = () => (
  <svg width="12" height="15" viewBox="0 0 12 15"><g fill="none" stroke="#15171c" strokeWidth="1.200"><rect x="1" y="4.500" width="7" height="6" rx="1" /><path d="M8 6.500 11 5.500v4.500l-3-1M2 2.300C4 .3 7 .3 9 2.300M2 12.700c2 2 5 2 7 0" /></g></svg>
);
const MicGlyph = () => (
  <svg width="11" height="15" viewBox="0 0 11 15"><rect x="2" y="0" width="7" height="11" rx="1" fill="#0a0a0a" /><path d="M.8 7.500V11h9.400V7.500M5.500 11v3M2.500 14.300h6" fill="none" stroke="#0a0a0a" strokeWidth="1.200" /></svg>
);
const Speaker = () => (
  <svg width="15" height="13" viewBox="0 0 15 13"><g fill="none" stroke="#15171c" strokeWidth="1.100"><path d="M.6 4.500h2.400L6.500 1v11L3 8.500H.6z" /><path d="M8.500 4.500q1.500 2 0 4M10.500 3q2.500 3.500 0 7" /><path d="M12.500 1.500q3.500 5 0 10" stroke="#8b8f98" /></g></svg>
);
const Battery = () => (
  <svg width="16" height="12" viewBox="0 0 16 12"><path d="M4 2.500h9.500v7H4zM14.500 4.500v3" fill="none" stroke="#15171c" strokeWidth="1.200" /><rect x="5" y="4" width="4" height="4" fill="#15171c" /><circle cx="2.500" cy="3" r="2.200" fill="#15171c" /><path d="M2.500 5v3.500h2" stroke="#15171c" fill="none" /></svg>
);
const Wifi = () => (
  <svg width="13" height="13" viewBox="0 0 13 13"><g fill="none" stroke="#4e525b" strokeWidth="1.200"><path d="M1 11.500C1.500 5 6 1 12 1" /><path d="M3.800 12C4 7.500 7.500 4 12 4" /><path d="M6.500 12C7 9.500 9 7.500 12 7" stroke="#15171c" /></g><circle cx="10.500" cy="11" r="1.600" fill="#15171c" /></svg>
);
const Pen = () => (
  <svg width="16" height="15" viewBox="0 0 16 15"><g fill="none" stroke="#15171c" strokeWidth="1.300"><path d="M5.500 8.500C3 7 1 8.500 1 11s2.500 3 4.500 1.500" /><path d="M6.500 13 7 8.500l3.500-7q2-1.500 3 .5L10 9z" /><path d="M10 10.500c1.500-1 1-3 2-3.500s1.500 2 3.500.5" /></g></svg>
);

const Slider = () => (
  <svg width="124" height="18" viewBox="0 0 124 18">
    <path d="M15 8.500h93" stroke="#54739f" /><path d="M15 9.500h93" stroke="#bcd1f1" />
    {[7, 116].map(x => <circle key={x} cx={x} cy="9" r="6.500" fill="#e9eff9" stroke="#51678c" />)}
    <path d="M3.500 9h7M112.500 9h7M116 5.500v7" stroke="#3b4a66" strokeWidth="1.800" />
    <path d="M60.500 3.500h8v7l-4 4-4-4z" fill="#eef3fb" stroke="#4e6a9a" />
    <path d="M64.500 6v5" stroke="#8d9cba" />
  </svg>
);

/* ---------- data ---------- */
const ribbonTabs: [string, number, number][] = [
  ['Home', 50, 28], ['Insert', 56, 27], ['Page Layout', 86, 58], ['Formulas', 67, 43.5], ['Data', 54, 23],
  ['Review', 57, 33], ['View', 52, 24], ['Developer', 76, 48.5], ['Acrobat', 64, 37],
];
type T = [string, number];
const sheetRows: { a?: T; b?: T; c?: T[]; tall?: boolean; spill?: boolean }[] = [
  { a: ['Popup', 47], b: ['Characters', 77], c: [['solution', 58]] },
  { a: ['Alert Popup', 85], b: ['below address bar and in the middle , we cant inspect, we cant move it', 503], c: [['switch_to.alert', 108], ['text, accept ,dismiss', 144]], tall: true },
  { a: ['File upload', 77], b: ['choose file /browser button - click ,we get popup to upload the file', 473], c: [['path of the file as arg for send_keys', 255]] },
  { a: ['File Download', 102], b: ['click on download link or file', 202], c: [['firefox- pyautogui', 128]] },
  { a: ['HTML popup/hidden div popup', 224], b: ['we can inspect it ,we cant move', 226], c: [['find_element', 94]] },
  { a: ['child browser/window', 162], b: ['another browser- min & max button', 259], c: [['window_handles and switchto_window', 284]], spill: true },
  { a: ['Notification popup', 133], b: ['below address bar and in the left side , we cant inspect, we cant move it', 511], c: [['changing the browser settings', 215]] },
  {}, {}, {}, {}, {}, {}, {}, {}, {}, {}, {},
];
const sheetTabs: [string, number, number, number][] = [
  ['WebDriver', 78, 75, 53], ['WebElement', 89, 77, 67], ['Exception', 71, 56, 50], ['New', 36, 23, 23],
  ['Limitation', 77, 64, 48], ['Fe Fes', 48, 31, 33], ['Wait', 41, 23, 23], ['Select', 50, 32, 32], ['ActionChain', 73, 66, 60],
];

const Label = ({ text, w, launcher }: { text: string; w: number; launcher?: boolean }) => (
  <GroupLabel><Fit w={w}>{text}</Fit>{launcher && <LauncherMark />}</GroupLabel>
);

function RibbonPanel() {
  return (
    <Ribbon>
      <Group $w={140} $gap={3}>
        <GroupBody>
          <BigButton $w={43}>
            <IconSlot><PasteIcon /></IconSlot>
            <BigLine><Fit w={25}>Paste</Fit></BigLine>
            <BigLine><Down /></BigLine>
          </BigButton>
          <SmallColumn $pl={2} $w={95}>
            <SmallButton $icon={16}><CutIcon /><Fit w={17}>Cut</Fit></SmallButton>
            <SmallButton $icon={16}><CopyIcon /><Fit w={25}>Copy</Fit></SmallButton>
            <SmallButton $icon={16}><PainterIcon /><Fit w={70}>Format Painter</Fit></SmallButton>
          </SmallColumn>
        </GroupBody>
        <Label text="Clipboard" w={47} launcher />
      </Group>

      <Group $w={183} $gap={3}>
        <GroupBody>
          <ControlRows>
            <ControlRow>
              <Combo $w={91}><Fit w={31}>Calibri</Fit><Down /></Combo>
              <Combo $w={41}><Fit w={10}>11</Fit><Down /></Combo>
              <Cluster $w={42}>
                <ToolButton><Glyph $size={15}>A</Glyph><svg width="4" height="12" viewBox="0 0 4 12"><path d="M0 3 2 0l2 3z" fill="#3457a4" /></svg></ToolButton>
                <ToolButton><Glyph $size={12}>A</Glyph><svg width="4" height="12" viewBox="0 0 4 12"><path d="M0 0h4L2 3z" fill="#3457a4" /></svg></ToolButton>
              </Cluster>
            </ControlRow>
            <ControlRow>
              <Cluster $w={74}>
                <ToolButton $w={20}><Glyph>B</Glyph></ToolButton>
                <ToolButton $w={22}><Glyph $italic>I</Glyph></ToolButton>
                <ToolButton><Glyph $under>U</Glyph><Down /></ToolButton>
              </Cluster>
              <Cluster $w={33}><ToolButton><BordersIcon /><Down /></ToolButton></Cluster>
              <Cluster $w={62}>
                <ToolButton><BucketIcon /><Down /></ToolButton>
                <ToolButton><FontColorIcon /><Down /></ToolButton>
              </Cluster>
            </ControlRow>
          </ControlRows>
        </GroupBody>
        <Label text="Font" w={22} launcher />
      </Group>

      <Group $w={233} $gap={3}>
        <GroupBody>
          <ControlRows $pl={2}>
            <ControlRow>
              <Cluster $w={65}>
                <ToolButton><LineIcon lines={topAlign} /></ToolButton>
                <ToolButton><LineIcon lines={midAlign} /></ToolButton>
                <ToolButton $on><LineIcon lines={bottomAlign} /></ToolButton>
              </Cluster>
              <Cluster $w={30}><ToolButton><OrientIcon /><Down /></ToolButton></Cluster>
            </ControlRow>
            <ControlRow>
              <Cluster $w={65}>
                <ToolButton><LineIcon lines={leftAlign} /></ToolButton>
                <ToolButton><LineIcon lines={centerAlign} /></ToolButton>
                <ToolButton><LineIcon lines={rightAlign} /></ToolButton>
              </Cluster>
              <Cluster $w={42}>
                <ToolButton><Indent out /></ToolButton>
                <ToolButton><Indent /></ToolButton>
              </Cluster>
            </ControlRow>
          </ControlRows>
          <VRule />
          <ControlRows $pl={0}>
            <WideButton><WrapIcon /><Fit w={49}>Wrap Text</Fit></WideButton>
            <WideButton><MergeIcon /><Fit w={77}>Merge & Center</Fit><Down /></WideButton>
          </ControlRows>
        </GroupBody>
        <Label text="Alignment" w={49} launcher />
      </Group>

      <Group $w={127} $gap={2}>
        <GroupBody>
          <ControlRows>
            <ControlRow><Combo $w={119}><Fit w={38}>General</Fit><Down /></Combo></ControlRow>
            <ControlRow>
              <Cluster $w={74}>
                <ToolButton $w={30}><CurrencyIcon /><Down /></ToolButton>
                <ToolButton><Fit w={11}>%</Fit></ToolButton>
                <ToolButton><svg width="5" height="8" viewBox="0 0 5 8"><circle cx="2.500" cy="2.200" r="2" fill="#1d2733" /><path d="M4.300 2q.3 3.500-3 5" fill="none" stroke="#1d2733" strokeWidth="1.200" /></svg></ToolButton>
              </Cluster>
              <Cluster $w={42}>
                <ToolButton><DecimalBox><DecimalLine><TinyArrow left />.0</DecimalLine><DecimalLine>.00</DecimalLine></DecimalBox></ToolButton>
                <ToolButton><DecimalBox><DecimalLine>.00</DecimalLine><DecimalLine><TinyArrow />.0</DecimalLine></DecimalBox></ToolButton>
              </Cluster>
            </ControlRow>
          </ControlRows>
        </GroupBody>
        <Label text="Number" w={39} launcher />
      </Group>

      <Group $w={164} $gap={2}>
        <GroupBody>
          <BigButton $w={70}><IconSlot><CondIcon /></IconSlot><BigLine><Fit w={57}>Conditional</Fit></BigLine><BigLine><Fit w={53}>Formatting</Fit><Down s={5} /></BigLine></BigButton>
          <BigButton $w={47}><IconSlot><FormatTableIcon /></IconSlot><BigLine><Fit w={33}>Format</Fit></BigLine><BigLine><Fit w={39}>as Table</Fit><Down s={5} /></BigLine></BigButton>
          <BigButton $w={44}><IconSlot><CellStylesIcon /></IconSlot><BigLine><Fit w={17}>Cell</Fit></BigLine><BigLine><Fit w={27}>Styles</Fit><Down s={5} /></BigLine></BigButton>
        </GroupBody>
        <Label text="Styles" w={27} />
      </Group>

      <Group $w={126} $gap={2}>
        <GroupBody>
          <BigButton $w={44}><IconSlot><InsertIcon /></IconSlot><BigLine><Fit w={27}>Insert</Fit></BigLine><BigLine><Down /></BigLine></BigButton>
          <BigButton $w={35}><IconSlot><DeleteIcon /></IconSlot><BigLine><Fit w={31}>Delete</Fit></BigLine><BigLine><Down /></BigLine></BigButton>
          <BigButton $w={42}><IconSlot><FormatIcon /></IconSlot><BigLine><Fit w={33}>Format</Fit></BigLine><BigLine><Down /></BigLine></BigButton>
        </GroupBody>
        <Label text="Cells" w={22} />
      </Group>

      <Group $w={164} $gap={0}>
        <GroupBody>
          <SmallColumn $pl={6} $w={78}>
            <SmallButton $icon={16}><SigmaIcon /><Fit w={44}>AutoSum</Fit><FarDown /></SmallButton>
            <SmallButton $icon={16}><FillIcon /><Fit w={14}>Fill</Fit><FarDown /></SmallButton>
            <SmallButton $icon={16}><EraserIcon /><Fit w={24}>Clear</Fit><FarDown /></SmallButton>
          </SmallColumn>
          <BigButton $w={41}><IconSlot><SortIcon /></IconSlot><BigLine><Fit w={31}>Sort &</Fit></BigLine><BigLine><Fit w={25}>Filter</Fit><Down s={5} /></BigLine></BigButton>
          <BigButton $w={38}><IconSlot><BinocIcon /></IconSlot><BigLine><Fit w={32}>Find &</Fit></BigLine><BigLine><Fit w={28}>Select</Fit><Down s={5} /></BigLine></BigButton>
        </GroupBody>
        <Label text="Editing" w={34} />
      </Group>
    </Ribbon>
  );
}

function Sheet() {
  return (
    <SheetArea>
      <Grid>
        <HeaderRow>
          <Corner><svg width="15" height="15" viewBox="0 0 15 15"><path d="M15 0v15H0z" fill="#e9f1fb" /></svg></Corner>
          {['A', 'B', 'C', 'D', 'E'].map(l => <ColHead key={l} $active={l === 'C'}>{l}</ColHead>)}
        </HeaderRow>
        {sheetRows.map((r, i) => (
          <Row key={i} $tall={r.tall}>
            <RowHead $active={i === 7}>{i + 1}</RowHead>
            <Cell>{r.a && <CellLine><Fit w={r.a[1]}>{r.a[0]}</Fit></CellLine>}</Cell>
            <Cell>{r.b && <CellLine><Fit w={r.b[1]}>{r.b[0]}</Fit></CellLine>}</Cell>
            <Cell $spill={r.spill}>{r.c?.map(([t, w]) => <CellLine key={t}><Fit w={w}>{t}</Fit></CellLine>)}</Cell>
            <Cell /><Cell />
          </Row>
        ))}
        <Selection />
        <Pointer width="15" height="16" viewBox="0 0 15 16"><path d="M5 1.500h5v4h4v5h-4v4H5v-4H1v-5h4z" fill="#fff" stroke="#111" strokeWidth="1.500" /></Pointer>
      </Grid>
      <VScroll>
        <SplitBox />
        <VArrow><svg width="8" height="5" viewBox="0 0 8 5"><path d="M4 0l4 5H0z" fill="#2c4577" /></svg></VArrow>
        <VThumb><svg width="7" height="8" viewBox="0 0 7 8"><path d="M0 .5h7M0 2.500h7M0 4.500h7M0 6.500h7" stroke="#6d7ea0" /></svg></VThumb>
        <VRest><svg width="8" height="5" viewBox="0 0 8 5"><path d="M0 0h8L4 5z" fill="#2c4577" /></svg></VRest>
      </VScroll>
    </SheetArea>
  );
}

const navPaths = ['M2 1v8M7 1v8L3 5z', 'M7 1v8L3 5z', 'M3 1v8l4-4z', 'M3 1v8l4-4zM8.500 1v8'];

function SheetTabs() {
  return (
    <TabStrip>
      <TabNav>{navPaths.map(d => <svg key={d} width="10" height="8" viewBox="0 0 10 10"><path d={d} fill="#213f80" stroke="#213f80" strokeWidth=".9" /></svg>)}</TabNav>
      {sheetTabs.map(([name, w, tw, fw]) => (
        <SheetTab key={name} $w={w}><SheetName $w={tw}><Fit w={fw}>{name}</Fit></SheetName>{name !== 'ActionChain' && <SlashHolder><Slash /></SlashHolder>}</SheetTab>
      ))}
      <SheetTab $w={66} $active><SheetName $w={54}><Fit w={38}>Popup</Fit></SheetName><SlashHolder><Slash /></SlashHolder></SheetTab>
      <NewSheet>
        <svg width="33" height="14" viewBox="0 0 33 14">
          <path d="M3.500 4.500h8v6l-2 1.500h-6z" fill="#f6f9ff" stroke="#6e7f9f" /><path d="M-1 4h7M2.500 .5v7M0 1.500l5 5M5 1.500l-5 5" stroke="#d98a2c" strokeWidth="1.100" />
          <path d="M17 14 29 0h4v14z" fill="#7c9bcd" /><path d="M16.500 14 28.500 0" stroke="#d9e7fa" />
        </svg>
      </NewSheet>
      <HScroll>
        <HSplit />
        <svg width="14" height="9" viewBox="0 0 14 9"><path d="M11 0v9L6 4.500z" fill="#2c4577" /></svg>
        <HThumb><svg width="8" height="7" viewBox="0 0 8 7"><path d="M.5 0v7M2.500 0v7M4.500 0v7M6.500 0v7" stroke="#6d7ea0" /></svg></HThumb>
        <Spring />
        <svg width="14" height="9" viewBox="0 0 14 9"><path d="M3 0v9l5-4.500z" fill="#2c4577" /></svg>
        <HSplit /><EndPad />
      </HScroll>
    </TabStrip>
  );
}

function Status() {
  return (
    <StatusBar>
      <StatusCell $w={44}><Fit w={29}>Ready</Fit></StatusCell>
      <StatusCell $w={31}>
        <svg width="14" height="12" viewBox="0 0 14 12"><rect x="1.500" y=".5" width="12" height="11" fill="#fff" stroke="#44598c" /><path d="M2 2.500h12" stroke="#6d86bd" strokeWidth="2" /><path d="M3 6.500h9M3 8.500h9M6.500 4v7M9.500 4v7" stroke="#b9c6df" /><circle cx="3" cy="3" r="2.800" fill="#d1483c" /></svg>
      </StatusCell>
      <ZoomArea>
        <ViewModes>
          <ViewMode $on><svg width="13" height="10" viewBox="0 0 13 10"><path d="M.5.5h12v9H.5zM.5 3.500h12M.5 6.500h12M4.500 .5v9M8.500 .5v9" fill="#fff" stroke="#5a5f6b" /></svg></ViewMode>
          <ViewMode><svg width="12" height="11" viewBox="0 0 12 11"><path d="M.5.5h11v10H.5z" fill="#c2c7d2" stroke="#5a5f6b" /><path d="M3.500 2.500h5v6h-5z" fill="#fff" stroke="#5a5f6b" /></svg></ViewMode>
          <ViewMode><svg width="12" height="11" viewBox="0 0 12 11"><path d="M.5.5h11v10H.5z" fill="#c2c7d2" stroke="#5a5f6b" /><path d="M1.500.5h3v6h-3zM6.500.5h3v6h-3z" fill="#fff" stroke="#5a5f6b" /></svg></ViewMode>
        </ViewModes>
        <Percent><Fit w={25}>130%</Fit></Percent>
        <Slider />
      </ZoomArea>
    </StatusBar>
  );
}

function Tasks() {
  return (
    <TaskBar>
      <StartButton><WinLogo /></StartButton>
      <SearchBox><SearchGlyph /><Fit w={119}>Type here to search</Fit></SearchBox>
      <AppButton $w={45}><svg width="16" height="16" viewBox="0 0 16 16"><circle cx="8" cy="8" r="6.300" fill="none" stroke="#0a0a0a" strokeWidth="2" /></svg></AppButton>
      <AppButton $w={46}><TaskView /></AppButton>
      <AppButton $open><FolderIcon /></AppButton>
      <AppButton><ChromeIcon /></AppButton>
      <AppButton $open><EdgeIcon /></AppButton>
      <AppButton><RarIcon /></AppButton>
      <AppButton $open><ZoomIcon /></AppButton>
      <AppButton $open><PyBox><PyInner>PC</PyInner></PyBox></AppButton>
      <AppButton $open><FirefoxIcon /></AppButton>
      <AppButton $open $active><ExcelIcon /></AppButton>
      <Tray>
        <TraySlot $w={28}><PeopleIcon /></TraySlot>
        <TraySlot $w={82}><WeatherIcon /></TraySlot>
        <Temp><Fit w={27}>24°C</Fit></Temp>
        <TraySlot $w={26}><Chev /></TraySlot>
        <TraySlot $w={21}><MeetNow /></TraySlot>
        <TraySlot $w={23}><MicGlyph /></TraySlot>
        <TraySlot $w={21}><Speaker /></TraySlot>
        <TraySlot $w={26}><Battery /></TraySlot>
        <TraySlot $w={22}><Wifi /></TraySlot>
        <TraySlot $w={26}><Pen /></TraySlot>
        <Clock><Fit w={45}>08:23 PM</Fit><Fit w={54}>01/02/2022</Fit></Clock>
        <TraySlot $w={36}><Notif><svg width="16" height="15" viewBox="0 0 16 15"><path d="M0 0h15v11H8l-3.500 3.500V11H0z" fill="#0a0a0a" /><path d="M2.500 3h10M2.500 5.500h10M2.500 8h6" stroke="#dfe2ec" /></svg><NotifCount>3</NotifCount></Notif></TraySlot>
        <NotifGap />
        <ShowDesktop />
      </Tray>
    </TaskBar>
  );
}

function Meeting() {
  return (
    <MeetingBar>
      <MeetingGroup $pl={15}>
        <MeetingButton $w={61}>
          <MeetingIcon><svg width="24" height="24" viewBox="0 0 24 24"><rect x="8" y="1" width="8" height="13" rx="4" fill="#a6a6a6" /><path d="M5 10c0 9 14 9 14 0M12 17v4M8 22h8" fill="none" stroke="#a6a6a6" strokeWidth="1.700" /><path d="M3 22.500 23 1.500" stroke="#1a1a1a" strokeWidth="4" /><path d="M2 23 23.500 1" stroke="#f04848" strokeWidth="1.600" /></svg></MeetingIcon>
          <Fit w={43}>Unmute</Fit>
        </MeetingButton>
        <Caret $w={4}><Chev w={9} c="#a6a6a6" sw={1.9} /></Caret>
        <MeetingButton $w={117}>
          <MeetingIcon><svg width="25" height="24" viewBox="0 0 25 24"><rect x="0" y="5" width="17" height="14" rx="2.500" fill="#a6a6a6" /><path d="M18.500 10 24 6.500v11.500l-5.500-3.500z" fill="#a6a6a6" /><path d="M3 22.500 23 1.500" stroke="#1a1a1a" strokeWidth="4" /><path d="M1 23 23 1" stroke="#f04848" strokeWidth="1.600" /></svg></MeetingIcon>
          <Fit w={59}>Start Video</Fit>
        </MeetingButton>
        <Caret $w={6} $back><Chev w={9} c="#a6a6a6" sw={1.9} /></Caret>
      </MeetingGroup>
      <div />
      <MeetingGroup $pl={14}>
        <MeetingButton $w={80}>
          <MeetingIcon><svg width="24" height="18" viewBox="0 0 24 18"><g fill="#a6a6a6"><circle cx="7.500" cy="4.500" r="4.200" /><path d="M0 16.500C0 8 15 8 15 16.500q0 1-1 1H1q-1 0-1-1z" /><circle cx="17.500" cy="6" r="3.500" /><path d="M16 11c4-1.500 8 1 8 5.500q0 1-1 1h-6.500z" /></g></svg></MeetingIcon>
          <Fit w={62}>Participants</Fit>
        </MeetingButton>
        <Caret $w={26}><Chev w={9} c="#a6a6a6" sw={1.9} /></Caret>
        <MeetingButton $w={78}>
          <MeetingIcon><svg width="21" height="18" viewBox="0 0 21 18"><path d="M3 0h15q3 0 3 3v8q0 3-3 3H9.500L5.500 18v-4H3q-3 0-3-3V3q0-3 3-3z" fill="#a6a6a6" /></svg></MeetingIcon>
          <Fit w={24}>Chat</Fit>
        </MeetingButton>
        <MeetingButton $w={99} $green>
          <MeetingIcon><svg width="24" height="18" viewBox="0 0 24 18"><rect width="24" height="18" rx="3.500" fill="#23d959" /><path d="M12 14V5M8.500 8.500 12 5l3.500 3.500" fill="none" stroke="#1a1a1a" strokeWidth="1.900" /></svg></MeetingIcon>
          <Fit w={69}>Share Screen</Fit>
        </MeetingButton>
        <MeetingButton $w={79}>
          <MeetingIcon><svg width="21" height="22" viewBox="0 0 21 22"><circle cx="10" cy="12" r="9" fill="#a6a6a6" /><circle cx="7" cy="10" r="1.200" fill="#1a1a1a" /><circle cx="13" cy="10" r="1.200" fill="#1a1a1a" /><path d="M5.500 13.500c1.500 4.500 7.500 4.500 9 0" fill="none" stroke="#1a1a1a" strokeWidth="1.500" /><circle cx="18" cy="3.500" r="4.500" fill="#1a1a1a" /><path d="M18 .5v6M15 3.500h6" stroke="#a6a6a6" strokeWidth="1.500" /></svg></MeetingIcon>
          <Fit w={51}>Reactions</Fit>
        </MeetingButton>
      </MeetingGroup>
      <LeaveButton><Fit w={33}>Leave</Fit></LeaveButton>
    </MeetingBar>
  );
}

export default function App() {
  return (
    <Page>
      <Global />
      <Screen>
        <TitleBar>
          <TitleLeft>
            <QuickAccess>
              <QuickSlot $w={14}><SaveIcon /></QuickSlot>
              <QuickSlot $w={26}><UndoIcon c="#3f63bd" /></QuickSlot>
              <Down s={5} c="#6d7788" />
              <QuickSlot $w={24}><UndoIcon c="#b7bcc6" flip /></QuickSlot>
              <Down s={4} c="#b7bcc6" />
              <QuickSlot $w={27}><PrinterIcon /></QuickSlot>
              <QuickSlot $w={14}><PreviewIcon /></QuickSlot>
            </QuickAccess>
            <svg width="6" height="7" viewBox="0 0 6 7"><path d="M1 .7h4" stroke="#1d2f58" strokeWidth="1.200" /><path d="M0 3h6L3 6.500z" fill="#1d2f58" /></svg>
          </TitleLeft>
          <WindowButtons>
            <svg width="11" height="11" viewBox="0 0 11 11"><path d="M0 5.500h10" stroke="#111" /></svg>
            <svg width="11" height="11" viewBox="0 0 11 11"><path d="M.5 2.500h7v7h-7zM2.500 2.500v-2h7v7h-2" fill="none" stroke="#111" strokeWidth="1.100" /></svg>
            <svg width="11" height="11" viewBox="0 0 11 11"><path d="M.5.5l10 10M10.500.5l-10 10" stroke="#111" strokeWidth="1.100" /></svg>
          </WindowButtons>
        </TitleBar>
        <TabRow>
          {ribbonTabs.map(([t, w, fw]) => <RibbonTab key={t} $w={w} $active={t === 'Home'}><Fit w={fw}>{t}</Fit></RibbonTab>)}
          <DocButtons>
            <HelpSlot><HelpIcon /></HelpSlot>
            <svg width="7" height="9" viewBox="0 0 7 9"><path d="M0 7h7" stroke="#51648a" strokeWidth="1.600" /></svg>
            <svg width="9" height="8" viewBox="0 0 9 8"><path d="M.5 3.500h6v3h-6zM2.500 3V1.500h6V5H7" fill="none" stroke="#51648a" strokeWidth="1.300" /></svg>
            <svg width="8" height="8" viewBox="0 0 8 8"><path d="M.5.5l7 7M7.500.5l-7 7" stroke="#51648a" strokeWidth="1.700" /></svg>
          </DocButtons>
        </TabRow>
        <RibbonPanel />
        <FormulaBar>
          <NameBox><Fit w={14}>C8</Fit><Down s={6} c="#111" /></NameBox>
          <FxArea>
            <svg width="11" height="12" viewBox="0 0 11 12"><circle cx="5" cy="6" r="4" fill="#d5dce8" /><path d="M5 2a4 4 0 0 1 4 4" stroke="#9aa7be" strokeWidth="1.500" fill="none" /></svg>
            <FxGlyph>fx</FxGlyph>
          </FxArea>
          <ExpandButton><svg width="7" height="8" viewBox="0 0 7 8"><path d="M.5.5l3 2.500 3-2.500M.5 4.500l3 2.500 3-2.500" fill="none" stroke="#111" strokeWidth="1.400" /></svg></ExpandButton>
        </FormulaBar>
        <FormulaGap />
        <Sheet />
        <SheetTabs />
        <Status />
        <Tasks />
      </Screen>
      <Meeting />

      <Count><Fit w={10}>11</Fit></Count>
      <OfficeButton><OfficeLogo /></OfficeButton>
      <Recording>
        <svg width="12" height="12" viewBox="0 0 12 12"><circle cx="6" cy="6" r="5.700" fill="#cf3f35" /><circle cx="6" cy="6" r="2.500" fill="#f08a80" /></svg>
        <Fit w={53}>Recording</Fit>
      </Recording>
      <Shield><svg width="14" height="15" viewBox="0 0 14 15"><path d="M7 0l6 2.300V8c0 3.500-3 5.500-6 7-3-1.500-6-3.500-6-7V2.300z" fill="#23d959" /><path d="M3.800 7.200 6.200 9.500l4-4" fill="none" stroke="#1e2a22" strokeWidth="1.600" /></svg></Shield>
      <Banner>
        <BannerText><Fit w={218}>You are viewing Bhanu Faculty's screen</Fit></BannerText>
        <BannerOptions><Fit w={69}>View Options</Fit><Chev w={7} c="#e8e8e8" sw={2} down /></BannerOptions>
      </Banner>
      <ViewBadge>
        <svg width="11" height="11" viewBox="0 0 11 11"><path d="M0 0h3v2.500H0zM4 0h3v2.500H4zM8 0h3v2.500H8zM0 3.500h11V11H0z" fill="#f2f2f2" /></svg>
        <Fit w={24}>View</Fit>
      </ViewBadge>
    </Page>
  );
}
